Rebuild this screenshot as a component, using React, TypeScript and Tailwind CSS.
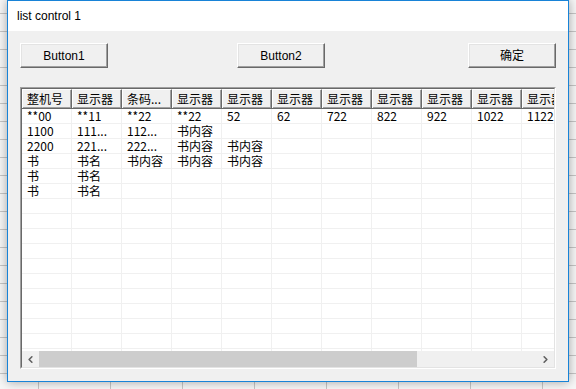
import { ChevronLeft, ChevronRight } from 'lucide-react'

const headers = ['整机号', '显示器', '条码...', '显示器', '显示器', '显示器', '显示器', '显示器', '显示器', '显示器', '显示器']

const rows: string[][] = [
  ['**00', '**11', '**22', '**22', '52', '62', '722', '822', '922', '1022', '1122'],
  ['1100', '111...', '112...', '书内容'],
  ['2200', '221...', '222...', '书内容', '书内容'],
  ['书', '书名', '书内容', '书内容', '书内容'],
  ['书', '书名'],
  ['书', '书名'],
]

const blankRows = 11

function WinButton({ label, className = '' }: { label: string; className?: string }) {
  return (
    <button
      className={`w-[88px] h-[25px] bg-[#f0f0f0] border border-t-white border-l-white border-r-[#696969] border-b-[#696969] shadow-[inset_-1px_-1px_0_#a0a0a0,inset_1px_1px_0_#e3e3e3] text-[12px] text-black font-['Liberation_Sans','Noto_Sans_CJK_SC',sans-serif] ${className}`}
    >
      {label}
    </button>
  )
}

function Cell({ text }: { text?: string }) {
  return (
    <div className="w-[50px] shrink-0 h-full border-r border-[#f0f0f0] pl-[5px] overflow-hidden whitespace-nowrap">
      {text}
    </div>
  )
}

export default function App() {
  const allRows = [...rows, ...Array.from({ length: blankRows }, () => [] as string[])]

  return (
    <div className="w-[576px] h-[389px] overflow-hidden bg-[#f7f7f7] bg-[linear-gradient(to_right,#c6c6c6_1px,transparent_1px),linear-gradient(to_bottom,#c6c6c6_1px,transparent_1px)] bg-[size:72px_18px] bg-[position:38px_13px]">
      {/* dialog window */}
      <div className="ml-[7px] w-[562px] h-[382px] border border-[#1883d7] bg-[#f0f0f0] shadow-[0_0_10px_rgba(0,0,0,0.35)] flex flex-col">
        <div className="h-[30px] bg-white flex items-center pl-[9px] text-[12px] text-black font-['Liberation_Sans',sans-serif]">
          list control 1
        </div>

        <div className="flex-1 px-[12px] pt-[12px]">
          <div className="flex w-[536px]">
            <WinButton label="Button1" />
            <WinButton label="Button2" className="ml-[129px]" />
            <WinButton label="确定" className="ml-[143px]" />
          </div>

          {/* list control */}
          <div className="mt-[19px] w-[536px] h-[282px] border border-t-[#a0a0a0] border-l-[#a0a0a0] border-r-white border-b-white">
            <div className="w-full h-full border border-t-[#696969] border-l-[#696969] border-r-[#e3e3e3] border-b-[#e3e3e3] bg-white flex flex-col overflow-hidden text-[12px] text-black font-['Noto_Sans_CJK_SC',sans-serif]">
              <div className="flex-1 overflow-hidden">
                <div className="flex h-[20px] bg-[#f0f0f0] border-b border-[#696969]">
                  {headers.map((h, i) => (
                    <div
                      key={i}
                      className="w-[50px] shrink-0 h-full border-l border-t border-l-white border-t-white border-r border-r-[#696969] shadow-[inset_-1px_-1px_0_#a0a0a0] pl-[4px] leading-[18px] overflow-hidden whitespace-nowrap"
                    >
                      {h}
                    </div>
                  ))}
                </div>
                {allRows.map((r, ri) => (
                  <div key={ri} className="flex h-[15px] leading-[14px] border-b border-[#f0f0f0]">
                    {headers.map((_, ci) => (
                      <Cell key={ci} text={r[ci]} />
                    ))}
                  </div>
                ))}
              </div>

              {/* horizontal scrollbar */}
              <div className="h-[16px] shrink-0 bg-[#f0f0f0] flex items-center">
                <div className="w-[17px] h-full flex items-center justify-center text-[#606060]">
                  <ChevronLeft size={11} strokeWidth={3.5} />
                </div>
                <div className="w-[378px] h-full bg-[#cdcdcd]" />
                <div className="flex-1" />
                <div className="w-[17px] h-full flex items-center justify-center text-[#606060]">
                  <ChevronRight size={11} strokeWidth={3.5} />
                </div>
              </div>
            </div>
          </div>
        </div>
      </div>
    </div>
  )
}
